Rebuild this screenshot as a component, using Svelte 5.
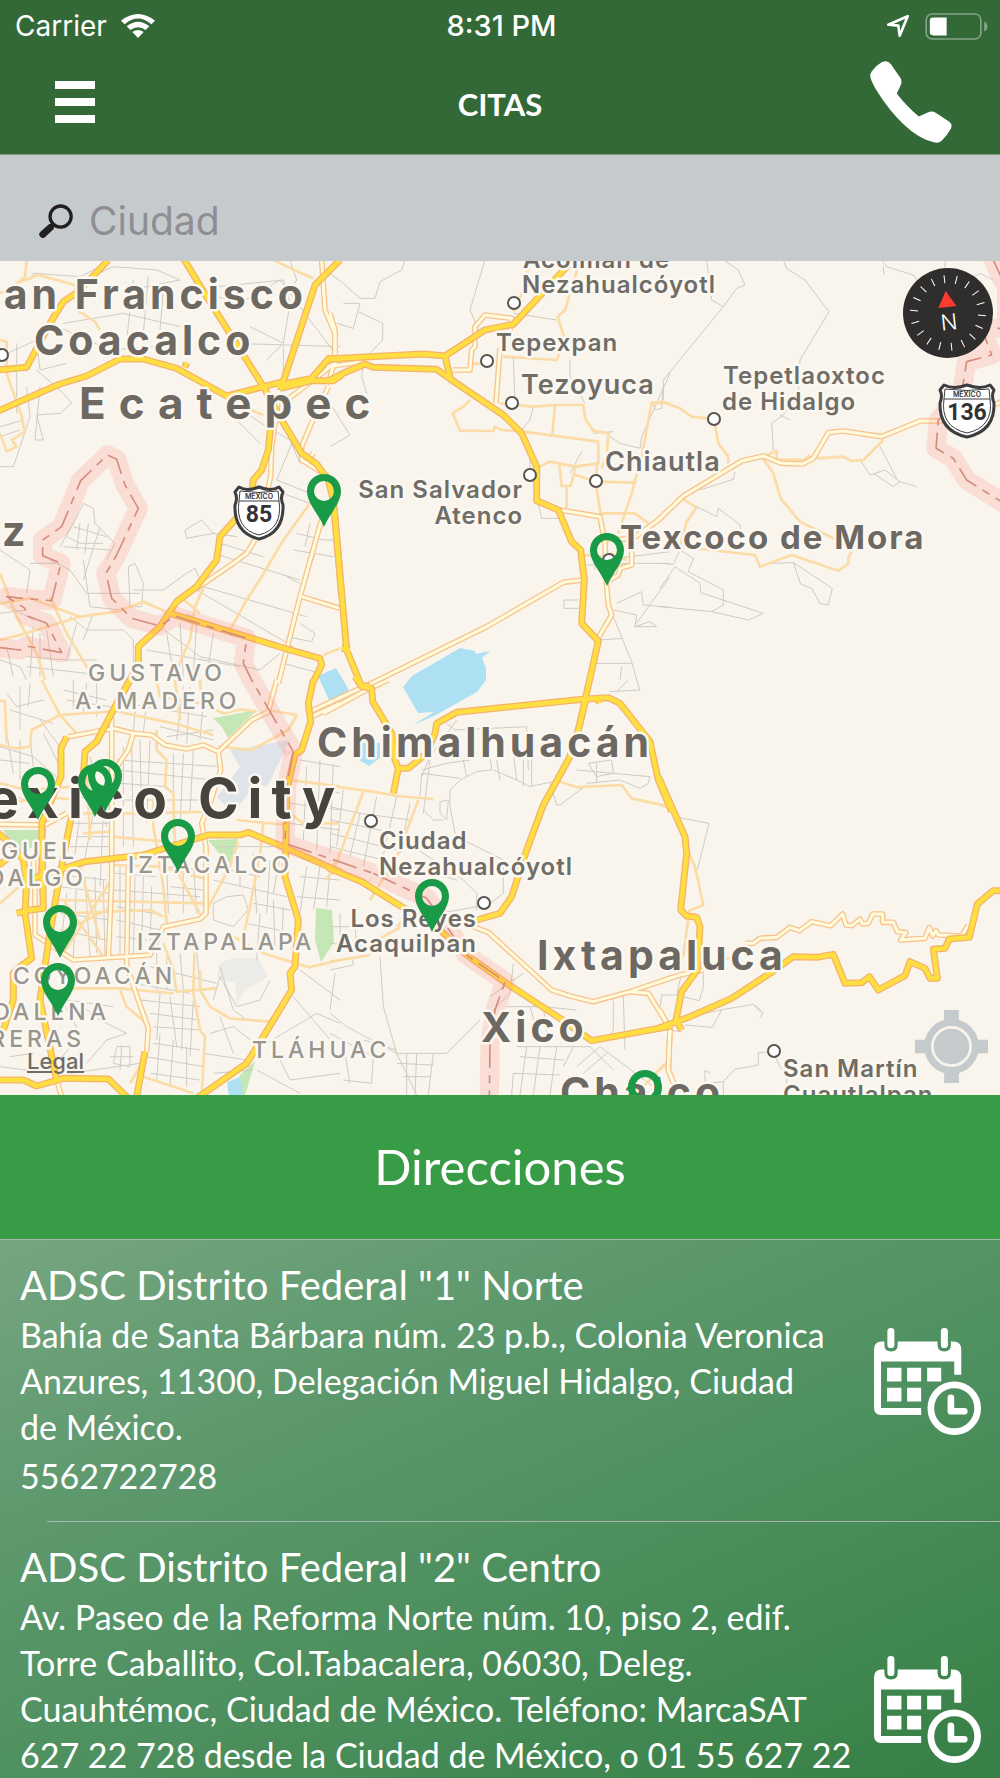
<script>
  // Each section is drawn at three units per map pixel, from its own origin.
  const sections = [
    {
      x: 0, y: 260,
      minor: 'M90,60 L100,40 L240,50 L300,20 M240,120 L250,60 L340,20 L470,30 L540,60 M380,240 L400,60 M430,220 L445,50 M480,210 L490,90 M390,90 L540,60 M190,190 L370,160 L540,200 M150,190 L330,270 L460,260 M0,290 L110,240 L120,330 L200,310 M50,250 L50,460 M110,330 L190,400 L215,430 L180,460 L110,465 L130,540 L105,540 L120,380 M80,380 L90,470 L40,620 L0,620 M0,500 L70,480 M0,530 L60,510 M650,80 L850,60 L870,130 L850,250 L800,300 M620,100 L720,130 L840,60 L1020,300 M870,0 L890,60 L860,100 M700,250 L1020,260 M750,200 L850,250 M740,460 L800,500 L870,540 L900,610 M880,540 L830,660 L930,700 M700,470 L780,550 M820,690 L930,730 M850,260 L850,350 M180,860 L220,790 L250,730 L280,745 L285,790 L345,850 L320,900 M200,830 L240,850 L310,850 M240,790 L230,870 M265,790 L255,880 M300,800 L250,960 M220,800 L320,830 M190,860 L330,870 M150,900 L210,930 L260,1000 L420,1000 M90,910 L180,910 M0,870 L90,930 L80,1000 M250,900 L270,1040 L360,1050 M385,920 L405,910 L430,970 L425,1040 L390,1040 Z M400,990 L490,990 L560,940 L585,925 L610,980 M555,810 L605,780 L640,820 L710,830 M555,810 L560,835 L640,820 M610,980 L920,1070 M640,880 L900,960 M660,850 L790,890 M590,990 L880,1160 M560,1060 L700,1130 M480,1100 L600,1190 L780,1230 L840,1180 M500,1120 L520,1240 M540,1090 L550,1250 M590,1090 L580,1240 M640,1120 L620,1250 M440,1170 L720,1220 M890,820 L970,840 L1020,840 M930,790 L915,860 M960,780 L940,900 M880,870 L1000,890 M860,950 L900,970 M900,1090 L945,1120 L935,1145 L860,1130 M850,1210 L960,1240 M210,1070 L260,1110 L370,1110 L400,1140 L400,1240 M230,1090 L200,1200 L290,1200 M280,1060 L250,1140 M100,1100 L90,1250 M120,1120 L120,1250 M140,1110 L160,1250 M80,1190 L200,1200 M80,1220 L260,1240 M30,1040 L100,1080 M0,1060 L80,1050 M0,1200 L60,1220 L80,1260 M20,1160 L40,1250',
      secondary: 'M80,0 L75,50 L40,80 L0,100 M50,70 L115,45 L225,75 L230,150 L285,185 L300,210 M820,0 L905,40 L940,55 M0,240 L20,245 L20,340 L65,470 L75,515 L35,540 L50,560 L20,575 L0,520 M0,940 L50,1070 L110,1180 L135,1260 M0,1030 L90,1015 L240,1070 L350,1055 L430,1025 L510,1060 M0,1140 L60,1125 L240,1070 M150,1010 L200,1120 L260,1220 L290,1260 M930,730 L850,840 L785,950 L740,1020 L690,1110 M610,985 L585,1040 L570,1140 L530,1230 M540,1010 L600,1060 M970,1185 L1020,1165 M700,430 L790,465',
      major: 'M965,0 L975,150 L1005,220 L1005,300 L985,370 M835,420 L815,560 L812,650 L800,700 M765,840 L740,880 L700,910 L590,985 M970,760 L900,1010 L835,1270 M905,1010 L1020,1045 M985,380 L930,500 L905,560 L905,600 L985,650 M1010,305 L940,360 L860,420 M940,580 L915,610',
      highway: 'M-10,330 L80,322 L150,190 L190,125 L235,95 L325,0 M-10,455 L180,372 L260,348 L360,297 L430,297 L530,325 L680,408 L790,380 M550,-5 L620,110 L790,380 L845,480 L905,580 L950,612 L985,660 L1000,720 L1015,890 L1025,1010 M790,380 L850,365 L945,75 L1020,0 M830,380 L925,362 L1000,362 L1025,345 M860,370 L935,355 L985,297 L1025,297 M840,385 L925,365 M825,400 L812,500 L805,570 L785,630 L760,660 L755,700 L740,740 L660,830 L650,900 L590,980 L530,1025 L480,1100 L415,1160 L415,1215 L340,1350 M510,1060 L740,1130 L870,1170 L960,1195 L965,1215 L940,1265 M555,322 L560,308',
      border: 'M-10,1162 L60,1170 L80,1158 L185,1178 L140,1090 L75,1065 L75,1045 L20,1010 L90,1017 L155,1022 L183,910 L128,887 L128,840 L185,800 L242,662 L322,585 L350,598 L375,675 L415,745 L350,885 L318,940 L335,1015 L395,1075 L480,1098 L525,1068 L740,1135 L730,1210 L755,1260 L880,1475'
    },
    {
      x: 330, y: 260,
      minor: 'M225,0 L215,30 L150,65 L135,115 L90,115 L40,70 L0,40 M85,155 L158,190 L158,240 L120,280 M40,130 L90,130 L70,205 L20,190 M465,0 L420,150 L450,220 M0,430 L60,525 L0,560 M100,310 L95,350 L110,400 M550,290 L555,430 M550,160 L680,180 M720,300 L720,350 L765,430 M610,440 L600,480 L575,510 M600,580 L600,640 M625,730 L635,775 L690,775 M755,575 L720,640 M790,520 L850,515 M840,530 L870,550 L930,565 L935,530 L1020,340 M970,430 L975,450 L995,445 L1000,380 M770,915 L905,910 L1020,910 M860,895 L1020,875 M745,1020 L702,1020 L702,1045 L745,1045 M860,1030 L935,995 L940,1035 L1020,1042 M850,1050 L920,1065 L915,1100 L960,1085 L980,1100 L915,1100 M920,1090 L1020,950 M850,1070 L905,1205 L920,1260 M810,1140 L875,1135 M800,1210 L905,1210 M875,1220 L870,1260 M795,930 L795,890',
      secondary: 'M600,0 L580,90 L550,155 M750,0 L705,150 L683,170 L705,240 L680,300 L520,290 M430,310 L470,312 M420,420 L400,440 L368,460 L390,512 L490,513 L495,500 L515,510 L580,515 L805,545 L805,610 L735,620 L660,605 L630,620 M510,430 L610,440 L675,435 L760,435 L765,475 L790,512 L835,520 L830,590 L815,625 M675,435 L667,525 M688,615 L695,678 L722,678 L737,620 M735,645 L800,665 L910,668 M800,605 L800,690 L812,760 L915,760 L955,790 M710,680 L710,745 M1020,430 L965,428 L935,590 L905,700 L865,820 M820,850 L870,830 M840,880 L890,900 M760,885 L820,890',
      major: 'M370,330 L420,330 L425,270 L435,260 L435,200 L465,165 L545,175 L540,210 M510,265 L498,430 M690,750 L810,770 L825,850 L830,980 L835,1035 L845,1065 L810,1125 L800,1150 M850,840 L910,835 L985,780 L1020,745 M905,840 L905,915 L870,925 L865,945 L840,960 M-65,1357 L145,1260 L470,1100 L700,967 L760,960 M0,160 L15,210 L15,300 M-10,320 L100,305',
      highway: 'M-10,297 L280,282 L345,288 L465,210 L550,193 L720,10 L730,-10 M-10,365 L50,335 L105,312 L130,322 L320,328 L365,360 L520,465 L575,520 L620,620 L620,722 L685,750 L725,845 L752,870 L763,960 L755,1090 L805,1143 L745,1410 L720,1490 M345,288 L360,350 L365,365 M10,720 L50,1170 L95,1280 M35,1165 L60,1168',
      border: ''
    },
    {
      x: 660, y: 260,
      minor: 'M140,0 L155,120 L190,140 L10,360 L10,420 M190,0 L235,30 L255,75 L230,85 L190,140 M370,0 L380,25 L435,60 L507,155 L420,300 L415,400 L370,465 L335,490 L340,570 M360,465 L390,480 M665,0 L680,20 L760,45 L800,100 M670,20 L672,45 M855,0 L855,60 M850,60 L930,60 L960,40 L1000,60 M120,690 L220,658 L225,635 M110,740 L170,770 L175,745 L240,795 L245,830 M660,560 L710,655 M600,600 L630,645 L675,630 L720,665 L700,680 L640,640 M720,665 L770,680 M0,910 L40,913 L60,870 L100,895 L85,935 L190,990 L190,1035 L155,1055 L0,1040 M0,985 L45,920 L120,970 L122,998 L310,1060 L265,1080 L155,1055 M330,910 L400,908 L422,972 L455,985 L480,1030 L505,1035 L517,985 L400,908',
      secondary: 'M0,423 L60,445 L95,470 L140,475 L165,495 L175,550 L205,590 L205,610 M305,590 L340,640 L362,715 L420,785 L530,840 L585,850 L565,895 L565,912 L535,932 L395,885 L300,920 L285,885 L60,860 L80,785 L110,742 L65,715 M310,590 L350,572 L350,598 L430,600 L450,585 M470,595 L550,590 L573,603 L610,600 L670,540',
      major: 'M-10,785 L70,708 L245,603 L310,588 L365,610 L428,612 L460,595 L505,518 L550,513 L665,530 L780,483 L860,483 M990,438 L1025,426',
      highway: '',
      border: 'M990,-20 L1040,85 L1040,205 L965,205 L995,285 L920,305 L905,400 L835,480 L828,565 L880,595 L920,660 L1040,735'
    },
    {
      x: 0, y: 680,
      minor: 'M20,40 L50,80 L130,60 M30,90 L160,130 M60,20 L60,150 M90,10 L85,80 M190,30 L320,60 M220,0 L220,90 M260,10 L250,100 M290,0 L290,110 M200,60 L330,80 M380,70 L620,110 M410,40 L400,160 M440,60 L430,160 M550,20 L530,180 M570,20 L560,190 M610,60 L600,180 M480,140 L640,180 M500,170 L640,150 M350,240 L660,260 M350,270 L640,300 M360,310 L500,320 M350,360 L600,360 M370,200 L370,500 M395,190 L400,500 M420,180 L425,420 M450,180 L440,430 M520,220 L520,460 M550,220 L540,440 M580,210 L570,400 M270,230 L320,440 M240,350 L330,380 M220,430 L330,430 M230,470 L340,470 M210,500 L330,500 M240,400 L220,560 M280,400 L250,560 M310,400 L300,620 M20,160 L40,280 M60,180 L60,300 M90,170 L100,260 M0,200 L100,230 L180,300 M0,240 L90,250 M0,330 L100,370 M120,120 L180,200 M130,160 L180,260 M140,580 L320,600 M180,620 L330,640 M180,700 L330,720 M180,750 L320,780 M200,640 L180,820 M230,600 L220,830 M255,590 L270,830 M285,590 L290,820 M310,600 L315,840 M345,580 L470,590 M340,630 L600,650 M350,680 L460,700 M350,720 L480,750 M350,770 L440,780 M360,560 L360,830 M405,590 L400,830 M430,590 L425,810 M455,620 L450,820 M500,540 L505,700 M550,540 L550,700 M580,540 L590,700 M500,560 L610,570 M510,620 L610,630 M640,560 L780,590 M640,600 L860,650 M650,500 L850,500 M720,520 L720,620 M760,520 L770,700 M810,540 L800,700 M840,530 L820,640 M640,670 L680,650 L730,645 L745,690 L700,740 L640,720 Z M760,670 L870,690 M780,700 L770,840 M820,660 L825,800 M850,680 L845,810 M740,730 L880,760 M450,860 L650,910 M470,820 L470,930 M500,830 L500,930 M540,820 L550,930 M590,810 L600,920 M400,910 L570,940 M420,960 L600,980 M450,1000 L600,1020 M460,1040 L600,1050 M480,940 L470,1080 M510,950 L530,1100 M550,940 L545,1110 M580,960 L570,1130 M460,1090 L600,1110 M440,1130 L610,1160 M450,1180 L600,1200 M480,1060 L470,1200 M520,1080 L510,1220 M560,1100 L560,1220 M350,1100 L390,1100 L390,1160 L340,1150 Z M330,1130 L400,1130 M365,1095 L360,1170 M260,1150 L320,1080 L380,1060 L300,1020 L250,980 M180,950 L240,1060 L180,1140 M200,960 L340,980 M30,1130 L100,1120 M0,1160 L80,1170 M210,1180 L420,1150 M640,960 L660,890 L710,980 L780,960 L810,900 M660,860 L700,990 L740,1020 M630,1060 L700,1040 L790,1110 M660,1010 L700,1120 M610,1120 L740,1140 M640,1180 L760,1170 M800,1090 L950,1000 L1020,1030 M880,950 L1000,1090 M900,870 L1020,960 M900,590 L1020,600 M890,650 L1020,660 M920,560 L900,700 M960,560 L940,690 M990,570 L980,680 M870,370 L1020,390 M870,430 L1020,450 M900,240 L1020,260 M920,260 L910,480 M960,240 L950,510 M1000,250 L990,520 M770,1170 L900,1240 M820,1100 L870,1200 L1020,1180',
      secondary: 'M0,60 L15,65 L20,190 M0,195 L50,205 L90,200 L95,150 L180,105 L330,95 M125,0 L180,105 M180,105 L230,160 M330,90 L520,130 L640,165 M470,0 L480,50 L600,70 L670,100 L720,88 L770,95 M525,0 L540,120 M600,0 L605,60 M800,90 L890,105 L865,150 L755,210 L655,200 M470,150 L470,210 L500,240 L495,320 L520,340 L525,500 L535,580 L610,720 M460,320 L460,440 L490,620 L500,730 M0,310 L80,330 L230,320 M0,380 L120,350 L240,360 M0,670 L80,600 L160,570 M180,660 L620,670 M190,700 L450,690 L490,710 M180,760 L340,680 M330,605 L190,820 M190,660 L310,830 M240,560 L300,780 M250,400 L430,400 L620,395 M330,470 L500,485 M340,555 L480,560 L610,595 M620,690 L690,560 L715,485 M790,430 L780,520 L750,680 L730,770 M710,420 L860,435 M870,300 L1020,320 M870,400 L910,430 L1020,430 M1010,540 L980,600 M490,790 L520,870 L530,935 L650,925 M200,925 L360,925 L520,940 M585,760 L580,940 L600,1050 L615,1070 L605,1245 M600,870 L600,930 L630,980 L690,1015 L810,1025 M360,930 L380,980 L440,1030 M700,770 L790,820 L925,862 L1020,840 M430,1190 L580,1240 M420,1160 L390,1210 M260,260 L270,480 M250,460 L330,455',
      major: 'M830,0 L805,95 L755,120 L655,215 L610,195 L560,207 L495,195 L455,165 L400,160 L340,145 L205,170 M335,110 L335,600 L325,835 M400,160 L385,210 L330,290 M655,215 L662,270 L630,370 L605,430 L618,500 L618,700 L600,717 L490,740 L450,825 L220,840 L105,765 L105,640 L100,530 M385,560 L380,860 L445,1045 L440,1115 M0,433 L135,435 L200,400 M935,110 L1020,70 M130,440 L120,600 L130,660 M170,1200 L185,1250',
      highway: 'M415,-45 L340,90 L290,185 L255,215 L250,290 L210,430 L170,640 L145,790 L120,960 L170,1200 M940,0 L925,70 L932,125 L905,210 L885,225 L860,330 L858,500 L855,590 L895,720 L885,860 L870,880 L875,930 L790,1070 L740,1150 L590,1255 M200,170 L183,205 L183,290 L125,430 L128,590 L130,685 L90,690 M-10,455 L40,500 L70,540 L80,610 L75,700 L95,835 L60,860 L40,880 L40,960 L10,1050 M75,595 L100,595 L255,545 L430,525 L510,500 L625,465 L720,465 L745,457 L860,505 L1025,578 M-10,1200 L70,1200 L110,1218 L190,1195 L325,1197 L385,1255 M435,1115 L410,1250 M50,700 L90,690 M-10,560 L30,530',
      border: 'M880,215 L860,320 L855,490 L1120,580'
    },
    {
      x: 330, y: 680,
      minor: 'M350,130 L375,150 L590,140 L595,270 M275,290 L300,230 L380,120 M275,270 L350,250 L420,240 M270,350 L275,280 L390,295 M300,240 L280,400 M400,240 L410,290 M480,230 L485,270 L440,275 L390,300 L360,330 L360,380 L375,460 M490,270 L560,300 L600,320 L690,300 M500,240 L510,300 M550,220 L560,300 M580,240 L580,320 M605,230 L605,320 M660,310 L680,375 L690,375 L770,315 M330,365 L355,360 L350,420 L330,400 Z M775,250 L845,240 L850,280 L800,290 Z M740,270 L960,290 L955,310 L930,325 L870,300 L770,310 M800,250 L800,310 M895,0 L860,35 M930,30 L840,35 M920,0 L930,30 M0,380 L90,400 L240,420 M0,420 L200,460 M0,460 L200,510 M0,500 L160,540 M40,330 L20,500 M90,400 L60,530 M140,350 L100,560 M200,350 L150,570 M240,370 L210,520 M0,330 L30,340 M280,390 L310,420 L340,420 M380,470 L520,540 L520,640 L480,670 M220,480 L400,600 L440,640 L440,690 M240,560 L380,600 M330,700 L440,680 M0,740 L130,740 M0,790 L110,800 M30,700 L30,800 M70,690 L80,790 M0,870 L70,855 L65,830 M150,830 L160,980 L200,1120 L350,1120 L450,1020 M0,1000 L50,1040 L200,1120 L260,1245 M15,880 L0,990 M100,1080 L200,1110 M0,1060 L130,1130 L125,1210 L40,1200 M40,1090 L60,1210 M230,1120 L230,1245 M260,1120 L255,1245 M310,1120 L295,1245 M200,1150 L310,1155 M220,1190 L300,1190 M550,850 L540,940 L480,1000 M580,880 L480,950 M530,980 L640,980 L740,990 M600,980 L620,1050 M640,980 L650,1060 M850,955 L850,1050 L830,1080 M880,950 L885,1110 M560,1100 L780,1100 M570,1130 L700,1140 M550,1180 L690,1185 M550,1180 L545,1245 M590,1100 L570,1245 M630,1100 L610,1245 M680,1100 L660,1245 M730,1100 L700,1160 M740,1160 L810,1100 L970,1220 M760,1180 L830,1120 M780,1100 L850,1170',
      secondary: 'M0,318 L130,335 L200,348 L310,357 M100,335 L5,585 M265,360 L205,520 L120,660 M690,305 L740,322 L875,315 L905,355 L1020,380 M215,740 L150,775 M200,740 L240,700 M0,845 L120,825 M940,1220 L1005,1150',
      major: 'M-20,100 L100,35 L175,0 M350,720 L430,740 L475,757 L665,930 L720,948 L790,965 L900,935 L1025,893 M900,935 L955,940 L1020,1045 L1015,1170 L1035,1220',
      highway: 'M-5,563 L95,605 L215,680 L330,750 L410,825 L530,910 L690,1015 L785,1082 L1025,1038 M770,50 L745,150 L720,230 L640,375 L590,510 L545,650 L510,700 L440,720 M75,-10 L95,20 L125,25 L128,65 L185,160 L195,240 L205,265 L235,265 L290,220 L315,160 L320,130 L380,97 L765,57 L835,53 L870,70 L960,185 L985,300 L1025,395 M205,265 L190,340 M95,18 L120,18 M805,60 L808,70',
      border: 'M130,580 L290,655 L410,825 L525,905 L495,990 L480,1090 L478,1260'
    },
    {
      x: 660, y: 680,
      minor: 'M55,412 L147,430 L112,570 M65,880 L50,945 L5,945 L0,980 M130,880 L130,920 L118,962 L50,945 M90,1010 L180,990 L280,973 L305,1000 M285,975 L310,998 L300,1012 M185,990 L157,1042 L75,1035 M65,1055 L20,1050 M330,1115 L295,1118 L295,1155 L225,1168 L190,1205 L190,1245 M345,1130 L360,1160 L380,1180 M150,1178 L135,1172 L135,1210 L190,1205 M380,1180 L380,1210',
      secondary: 'M85,515 L105,560 L130,675 L88,692 L70,830 M0,375 L20,380 M0,1170 L20,1150 M130,860 L220,830',
      major: 'M0,905 L60,885 L130,870 M0,990 L30,1050 L25,1170 L45,1220 M255,790 L280,790 L300,775 L350,772 L390,742 L418,752 L455,725 L512,737 L548,702 L558,735 L575,737 L600,718 L608,732 L625,730 L638,702 L668,702 L668,727 L700,727 L712,755 L738,758 L722,780 L795,775 L808,742 L818,768 L828,752 L835,765 L905,768 L925,735',
      highway: 'M-5,1045 L90,1010 L215,955 L330,880 L400,830 L470,832 L520,823 L555,910 L605,908 L628,890 L655,930 L735,887 L750,845 L795,865 L810,895 L832,895 L820,808 L855,805 L868,777 L928,772 L952,672 L1000,632 L1025,632 M-5,290 L75,470 L80,520 L62,690 L80,708 L110,712 L120,740 L112,870 L65,935 L48,1020 L65,1050',
      border: ''
    }
  ];

  const layers = [
    { cls: 'minor', key: 'minor' },
    { cls: 'secondary', key: 'secondary' },
    { cls: 'major-edge', key: 'major' },
    { cls: 'major', key: 'major' },
    { cls: 'highway-edge', key: 'highway' },
    { cls: 'highway', key: 'highway' },
    { cls: 'border-band', key: 'border' },
    { cls: 'border-line', key: 'border' }
  ];

  const towns = [
    [514, 303], [487, 361], [512, 403], [530, 475], [596, 481], [714, 419],
    [371, 821], [484, 903], [774, 1051], [2, 355], [609, 560]
  ];

  const labels = [
    { t: 'San Francisco', x: 307, y: 309, k: 'city end' },
    { t: 'Coacalco', x: 34, y: 355, k: 'city' },
    { t: 'Ecatepec', x: 79, y: 419, k: 'city wide' },
    { t: 'z', x: 2, y: 546, k: 'city' },
    { t: 'Chimalhuacán', x: 317, y: 757, k: 'city' },
    { t: 'Ixtapaluca', x: 537, y: 970, k: 'city' },
    { t: 'Xico', x: 481, y: 1042, k: 'city' },
    { t: 'Chalco', x: 560, y: 1107, k: 'city' },
    { t: 'Texcoco de Mora', x: 620, y: 549, k: 'city small' },
    { t: 'Mexico City', x: 344, y: 818, k: 'capital end' },
    { t: 'Acolmán de', x: 523, y: 268, k: 'town' },
    { t: 'Nezahualcóyotl', x: 522, y: 293, k: 'town' },
    { t: 'Tepexpan', x: 496, y: 351, k: 'town' },
    { t: 'Tezoyuca', x: 521, y: 394, k: 'town big' },
    { t: 'Tepetlaoxtoc', x: 723, y: 384, k: 'town' },
    { t: 'de Hidalgo', x: 722, y: 410, k: 'town' },
    { t: 'Chiautla', x: 605, y: 471, k: 'town big' },
    { t: 'San Salvador', x: 523, y: 498, k: 'town end' },
    { t: 'Atenco', x: 523, y: 524, k: 'town end' },
    { t: 'Ciudad', x: 379, y: 849, k: 'town' },
    { t: 'Nezahualcóyotl', x: 379, y: 875, k: 'town' },
    { t: 'Los Reyes', x: 477, y: 927, k: 'town end' },
    { t: 'Acaquilpan', x: 477, y: 952, k: 'town end' },
    { t: 'San Martín', x: 783, y: 1077, k: 'town' },
    { t: 'Cuautlalpan', x: 783, y: 1103, k: 'town' },
    { t: 'GUSTAVO', x: 88, y: 681, k: 'district' },
    { t: 'A. MADERO', x: 75, y: 709, k: 'district' },
    { t: 'IZTACALCO', x: 128, y: 873, k: 'district' },
    { t: 'IZTAPALAPA', x: 137, y: 950, k: 'district' },
    { t: 'COYOACÁN', x: 13, y: 984, k: 'district' },
    { t: 'MAGDALENA', x: 110, y: 1020, k: 'district end' },
    { t: 'CONTRERAS', x: 85, y: 1047, k: 'district end' },
    { t: 'TLÁHUAC', x: 252, y: 1058, k: 'district' },
    { t: 'MIGUEL', x: 78, y: 859, k: 'district end' },
    { t: 'HIDALGO', x: 87, y: 886, k: 'district end' }
  ];

  const pins = [
    [324, 474], [607, 533], [38, 767], [95, 764], [105, 759],
    [178, 819], [60, 905], [58, 963], [432, 879], [645, 1070]
  ];

  const shields = [
    { x: 259, y: 513, w: 24, n: '85' },
    { x: 967, y: 411, w: 27, n: '136' }
  ];

  const ticks = Array.from({ length: 18 }, (_, i) => i * 20 - 6);

  const offices = [
    {
      name: 'ADSC Distrito Federal "1" Norte',
      address: 'Bahía de Santa Bárbara núm. 23 p.b., Colonia Veronica Anzures, 11300, Delegación Miguel Hidalgo, Ciudad de\u00a0México.',
      phone: '5562722728'
    },
    {
      name: 'ADSC Distrito Federal "2" Centro',
      address: 'Av. Paseo de la Reforma Norte núm. 10, piso 2, edif. Torre Caballito, Col.Tabacalera, 06030, Deleg. Cuauhtémoc, Ciudad de\u00a0México. Teléfono: MarcaSAT 627 22 728 desde la Ciudad de México, o 01 55 627 22 728.',
      phone: '5562722728'
    }
  ];

  let city = $state('');
</script>

<div class="app">
  <header>
    <div class="status">
      <div class="carrier">
        <span>Carrier</span>
        <svg class="wifi" viewBox="0 0 102 72" aria-hidden="true">
          <path d="M0,20 Q51,-20 102,20 L91,31 Q51,-4 11,31 Z M17,37 Q51,10 85,37 L74,48 Q51,31 28,48 Z M34,54 Q51,42 68,54 L51,72 Z" />
        </svg>
      </div>
      <time>8:31 PM</time>
      <div class="power">
        <svg class="location" viewBox="0 0 66 66" aria-hidden="true">
          <path d="M62,4 L4,29 L34,32 L38,62 Z" />
        </svg>
        <svg class="battery" viewBox="0 0 190 82" aria-hidden="true">
          <rect class="shell" x="3" y="3" width="166" height="76" rx="18" />
          <path class="tip" d="M179,26 Q189,31 189,41 Q189,51 179,56 Z" />
          <path class="charge" d="M24,14 H65 V68 H24 Q14,68 14,58 V24 Q14,14 24,14 Z" />
        </svg>
      </div>
    </div>
    <div class="bar">
      <button class="menu" aria-label="Menú"><i></i><i></i><i></i></button>
      <h1>CITAS</h1>
      <button class="call" aria-label="Llamar">
        <svg viewBox="92 182 245 245" aria-hidden="true">
          <path d="M128,185 Q145,179 154,191 L183,233 Q189,243 183,256 L172,279 Q200,316 238,348 L266,335 Q277,330 287,336 L328,363 Q339,371 334,384 Q324,403 306,420 Q297,429 283,425 Q238,415 192,371 Q150,331 116,277 Q96,245 93,229 Q92,220 97,213 Q110,195 128,185 Z" />
        </svg>
      </button>
    </div>
  </header>

  <label class="search">
    <svg viewBox="0 0 102 103" aria-hidden="true">
      <circle cx="65" cy="38" r="32" />
      <path class="neck" d="M43,62 L34,71" />
      <path class="grip" d="M34,71 L11,92" />
    </svg>
    <input type="text" placeholder="Ciudad" aria-label="Ciudad" bind:value={city} />
  </label>

  <section class="map" aria-label="Mapa">
    <svg class="canvas" viewBox="0 261 1000 834" preserveAspectRatio="xMidYMid slice">
      <path class="park" d="M213,718 L257,710 L228,738 L222,727 Z M3,830 L42,830 L37,847 L20,850 L12,845 Z M208,840 L238,839 L230,863 L218,852 Z M316,908 L332,910 L334,942 L321,962 L315,940 Z M240,1075 L255,1061 L245,1096 L236,1096 Z" />
      <path class="airfield" d="M230,750 L290,740 L267,787 L257,783 L233,813 L217,797 L240,767 Z" />
      <path class="hill" d="M220,963 L233,958 L258,958 L268,977 L245,990 L237,1003 L235,983 L217,977 Z" />
      <path class="water" d="M403,687 L412,676 L460,648 L475,651 L476,654 L490,651 L482,658 L486,668 L486,680 L477,692 L434,716 L413,725 L434,712 L418,713 Z M318,676 L336,668 L349,690 L330,702 Z M360,743 L380,743 L380,758 L369,766 L359,760 Z M227,1082 L240,1077 L243,1096 L229,1096 Z" />
      {#each layers as layer (layer.cls)}
        <g class={layer.cls}>
          {#each sections as s}
            {#if s[layer.key]}
              <path transform="translate({s.x} {s.y}) scale(0.33333)" d={s[layer.key]} />
            {/if}
          {/each}
        </g>
      {/each}
      {#each towns as [cx, cy]}
        <circle class="town-dot" {cx} {cy} r="6" />
      {/each}
      {#each labels as l}
        <text class={l.k} x={l.x} y={l.y}>{l.t}</text>
      {/each}
      {#each shields as s}
        <g transform="translate({s.x} {s.y})">
          <path class="shield" d="M{-s.w + 4},-26 Q{-s.w / 2},-21 0,-26 Q{s.w / 2},-21 {s.w - 4},-26 L{s.w},-21 Q{s.w - 3},-15 {s.w},-8 Q{s.w + 1},20 0,26 Q{-s.w - 1},20 {-s.w},-8 Q{-s.w + 3},-15 {-s.w},-21 Z" />
          <path class="shield-line" d="M{-s.w + 5},-22 Q0,-19 {s.w - 5},-22 L{s.w - 4},-12 H{-s.w + 4} Z M{-s.w + 4},-12 Q{-s.w},16 0,22 Q{s.w},16 {s.w - 4},-12" />
          <text class="shield-top" y="-14">MEXICO</text>
          <text class="shield-number" y="9">{s.n}</text>
        </g>
      {/each}
      {#each pins as [x, y]}
        <path class="pin" fill-rule="evenodd" transform="translate({x} {y})" d="M0,0 C9,0 17,7 17,17 C17,29 6,39 0,53 C-6,39 -17,29 -17,17 C-17,7 -9,0 0,0 Z M0,7 A10,10 0 1 0 0,27 A10,10 0 1 0 0,7 Z" />
      {/each}
    </svg>
    <button class="compass" aria-label="Norte">
      <svg viewBox="-45 -45 90 90">
        <circle r="45" />
        {#each ticks as a}
          <path class="tick" d="M0,-38 V-30" transform="rotate({a})" />
        {/each}
        <g transform="rotate(-6)">
          <path class="needle" d="M0,-22 L9,-6 H-9 Z" />
          <text y="17">N</text>
        </g>
      </svg>
    </button>
    <button class="locate" aria-label="Mi ubicación">
      <svg viewBox="-109 -109 218 218" aria-hidden="true">
        <path d="M-22,-109 H22 V-80 Q66,-66 80,-20 H109 V20 H80 Q66,66 22,80 V109 H-22 V80 Q-66,66 -80,20 H-109 V-20 H-80 Q-66,-66 -22,-80 Z" />
        <circle r="57" />
      </svg>
    </button>
    <a class="legal" href="#legal">Legal</a>
  </section>

  <h2>Direcciones</h2>

  <ul>
    {#each offices as o}
      <li>
        <div class="details">
          <h3>{o.name}</h3>
          <p>{o.address}</p>
          <p class="phone">{o.phone}</p>
        </div>
        <button class="book" aria-label="Agendar cita en {o.name}">
          <svg viewBox="72 83 320 320" aria-hidden="true">
            <path d="M72,147 Q72,123 96,123 H103 V133 Q103,153 123,153 Q143,153 143,133 V123 H262 V133 Q262,153 282,153 Q302,153 302,133 V123 H308 Q333,123 333,147 V223 H312 V183 H93 V322 H213 V343 H94 Q72,343 72,321 Z" />
            <path d="M111,202 H154 V243 H111 Z M171,202 H213 V243 H171 Z M231,202 H273 V243 H231 Z M111,262 H154 V303 H111 Z M171,262 H213 V303 H171 Z" />
            <rect x="112" y="83" width="21" height="60" rx="10" />
            <rect x="272" y="83" width="21" height="60" rx="10" />
            <circle cx="312" cy="323" r="70" />
            <path class="hands" d="M302,292 V332 H342" />
          </svg>
        </button>
      </li>
    {/each}
  </ul>
</div>

<style>
  :global(body) {
    margin: 0;
  }

  .app {
    display: flex;
    flex-direction: column;
    height: 100vh;
    overflow: hidden;
    font-family: Lato, sans-serif;
    color: #fff;
  }

  button {
    border: 0;
    padding: 0;
    background: none;
    color: inherit;
    cursor: pointer;
  }

  svg {
    display: block;
    fill: #fff;
  }

  header {
    flex: none;
    background: #326937;
    border-bottom: 1px solid #7b9f80;
  }

  .status {
    display: grid;
    grid-template-columns: 1fr auto 1fr;
    align-items: center;
    height: 52px;
    padding: 0 12px 0 15px;
    font-family: Inter, sans-serif;
    font-size: 28px;
    line-height: 50px;
  }

  .carrier,
  .power {
    display: flex;
    align-items: center;
    gap: 14px;
  }

  .power {
    justify-content: flex-end;
    gap: 16px;
  }

  time {
    font-weight: 500;
    font-size: 29px;
  }

  .wifi {
    width: 34px;
    height: 24px;
  }

  .location {
    width: 22px;
    height: 22px;
    fill: none;
    stroke: #fff;
    stroke-width: 8;
    stroke-linejoin: round;
  }

  .battery {
    width: 63px;
    height: 27px;
  }

  .shell {
    fill: none;
    stroke: #84a487;
    stroke-width: 5;
  }

  .tip {
    fill: #84a487;
  }

  .bar {
    display: grid;
    grid-template-columns: 1fr auto 1fr;
    align-items: center;
    height: 100px;
    padding: 0 48px 2px;
  }

  .menu {
    display: grid;
    gap: 9px;
    width: 40px;
    margin-left: 7px;
  }

  .menu i {
    height: 8px;
    background: #fff;
  }

  h1 {
    margin: 0;
    padding-top: 4px;
    font-size: 31px;
    line-height: 40px;
    font-weight: 700;
  }

  .call {
    justify-self: end;
  }

  .call svg {
    width: 82px;
    height: 82px;
  }

  .search {
    flex: none;
    display: flex;
    align-items: center;
    gap: 16px;
    padding: 26px 39px 0;
    height: 80px;
    background: #c5cacd;
  }

  .search svg {
    width: 34px;
    height: 34px;
    fill: none;
    stroke: #231f20;
    stroke-width: 10;
    stroke-linecap: round;
  }

  .search .grip {
    stroke-width: 21;
  }

  .search input {
    flex: 1;
    min-width: 0;
    padding: 0;
    border: 0;
    outline: 0;
    background: none;
    color: #333;
    font-family: Inter, sans-serif;
    font-size: 39px;
    line-height: 52px;
  }

  .search input::placeholder {
    color: #8e8e93;
    opacity: 1;
  }

  .map {
    flex: none;
    position: relative;
    aspect-ratio: 1000 / 834;
    overflow: hidden;
    background: #f9f5ed;
  }

  .canvas {
    width: 100%;
    height: 100%;
    font-family: Inter, sans-serif;
  }

  .canvas g {
    stroke-linejoin: round;
  }

  .park { fill: #c5e6b5; }
  .airfield { fill: #dfe4ea; }
  .hill { fill: #ebebe8; }
  .water { fill: #ade0f3; }

  .minor,
  .secondary,
  .major,
  .major-edge,
  .highway,
  .highway-edge,
  .border-band,
  .border-line {
    fill: none;
  }

  .minor { stroke: #cecbc4; stroke-width: 3; }
  .secondary { stroke: #fbdca6; stroke-width: 8; }
  .major-edge { stroke: #f7c48e; stroke-width: 17; }
  .major { stroke: #fffbdc; stroke-width: 9; }
  .highway-edge { stroke: #f5b36c; stroke-width: 21; }
  .highway { stroke: #ffdf3f; stroke-width: 13; }
  .border-band { stroke: #ff7a70; stroke-opacity: 0.18; stroke-width: 58; }
  .border-line { stroke: #d68c7f; stroke-width: 5; stroke-dasharray: 75 22 24 22; }

  .town-dot {
    fill: #fff;
    stroke: #57544e;
    stroke-width: 2;
  }

  .canvas text {
    paint-order: stroke;
    stroke: #fbf8f2;
    stroke-width: 5px;
    stroke-linejoin: round;
  }

  .canvas .city {
    fill: #6d6962;
    font-size: 41px;
    font-weight: 700;
    letter-spacing: 4px;
  }

  .canvas .wide {
    font-size: 44px;
    letter-spacing: 13px;
  }

  .canvas .small {
    font-size: 33px;
    letter-spacing: 2px;
  }

  .canvas .capital {
    fill: #47433d;
    font-size: 55px;
    font-weight: 700;
    letter-spacing: 9px;
  }

  .canvas .town {
    fill: #706c66;
    font-size: 24px;
    font-weight: 600;
    letter-spacing: 1px;
  }

  .canvas .big {
    font-size: 27px;
  }

  .canvas .district {
    fill: #98958f;
    font-size: 23px;
    font-weight: 500;
    letter-spacing: 4px;
  }

  .canvas .end {
    text-anchor: end;
  }

  .shield {
    fill: #fff;
    stroke: #3d3d40;
    stroke-width: 3;
  }

  .shield-line {
    fill: none;
    stroke: #3d3d40;
    stroke-width: 1;
  }

  .canvas .shield-top,
  .canvas .shield-number {
    fill: #333;
    stroke: none;
    text-anchor: middle;
    font-size: 7px;
    font-weight: 600;
  }

  .canvas .shield-number {
    font-family: Roboto, sans-serif;
    font-size: 23px;
    font-weight: 700;
  }

  .pin {
    fill: #189a46;
  }

  .compass {
    position: absolute;
    top: 7px;
    right: 7px;
    width: 90px;
  }

  .compass circle {
    fill: #302e2d;
  }

  .tick {
    stroke: #fff;
    stroke-width: 1;
  }

  .needle {
    fill: #ff3b30;
  }

  .compass text {
    font-family: Inter, sans-serif;
    font-size: 22px;
    font-weight: 300;
    text-anchor: middle;
  }

  .locate {
    position: absolute;
    right: 12px;
    bottom: 12px;
    width: 73px;
  }

  .locate svg {
    fill: #c5cacd;
  }

  .locate circle {
    stroke: #f9f5ed;
    stroke-width: 8;
  }

  .legal {
    position: absolute;
    left: 27px;
    bottom: 21px;
    color: #706c66;
    font-family: Inter, sans-serif;
    font-size: 22px;
    line-height: 26px;
    font-weight: 500;
  }

  h2 {
    flex: none;
    margin: 0;
    padding: 41px 0 43px;
    background: #389b45;
    font-size: 49px;
    line-height: 60px;
    font-weight: 400;
    text-align: center;
  }

  ul {
    flex: 1;
    min-height: 0;
    margin: 0;
    padding: 0;
    overflow-y: auto;
    scrollbar-width: none;
    list-style: none;
    border-top: 1px solid #a3b8a6;
    background: linear-gradient(156deg, #75a580 0%, #5c986c 32%, #4b8e5c 62%, #367f45 100%);
  }

  li {
    display: grid;
    grid-template-columns: 1fr 107px;
    align-items: center;
    gap: 12px;
    padding: 20px 19px 22px 20px;
  }

  li + li {
    border-top: 1px solid;
    border-image: linear-gradient(to right, transparent 48px, #a8b5aa 48px) 1;
  }

  h3 {
    margin: 0;
    font-size: 40px;
    line-height: 50px;
    font-weight: 400;
  }

  p {
    margin: 2px 0 0;
    font-size: 34px;
    line-height: 46px;
  }

  .phone {
    margin-top: 3px;
  }

  .book {
    padding-top: 4px;
  }

  .book circle {
    fill: none;
    stroke: #fff;
    stroke-width: 20;
  }

  .hands {
    fill: none;
    stroke: #fff;
    stroke-width: 20;
    stroke-linecap: round;
    stroke-linejoin: round;
  }
</style>
